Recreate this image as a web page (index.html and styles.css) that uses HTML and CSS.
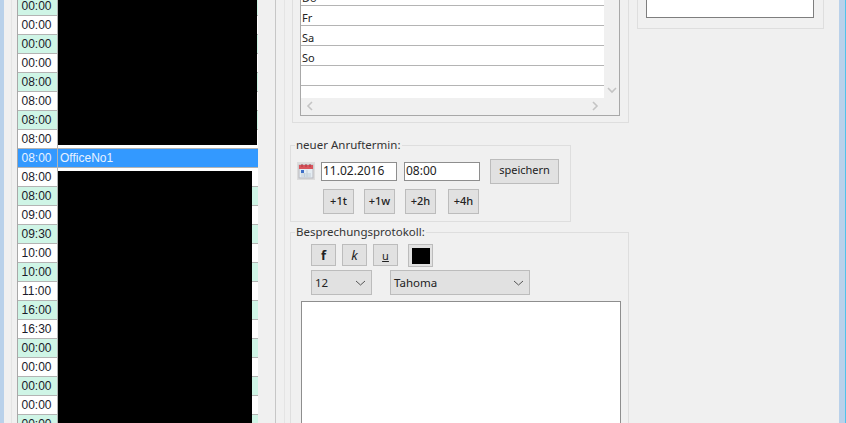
FILE: index.html
```html
<!DOCTYPE html>
<html lang="en">

<head>
    <meta charset="UTF-8">
    <meta name="viewport" content="width=device-width, initial-scale=1.0">
    <title>Anruftermine</title>
    <link rel="stylesheet" href="styles.css">
</head>

<body>
    <div class="window">
        <div class="client">
            <div class="list-pane">
                <div class="call-list">
                    <div class="row mint"><div class="time">00:00</div></div>
                    <div class="row"><div class="time">00:00</div></div>
                    <div class="row mint"><div class="time">00:00</div></div>
                    <div class="row"><div class="time">00:00</div></div>
                    <div class="row mint"><div class="time">08:00</div></div>
                    <div class="row"><div class="time">08:00</div></div>
                    <div class="row mint"><div class="time">08:00</div></div>
                    <div class="row"><div class="time">08:00</div></div>
                    <div class="row selected"><div class="time">08:00</div><div class="name">OfficeNo1</div></div>
                    <div class="row"><div class="time">08:00</div></div>
                    <div class="row mint"><div class="time">08:00</div></div>
                    <div class="row"><div class="time">09:00</div></div>
                    <div class="row mint"><div class="time">09:30</div></div>
                    <div class="row"><div class="time">10:00</div></div>
                    <div class="row mint"><div class="time">10:00</div></div>
                    <div class="row"><div class="time">11:00</div></div>
                    <div class="row mint"><div class="time">16:00</div></div>
                    <div class="row"><div class="time">16:30</div></div>
                    <div class="row mint"><div class="time">00:00</div></div>
                    <div class="row"><div class="time">00:00</div></div>
                    <div class="row mint"><div class="time">00:00</div></div>
                    <div class="row"><div class="time">00:00</div></div>
                    <div class="row mint"><div class="time">00:00</div></div>
                    <div class="redact redact-top"></div>
                    <div class="redact redact-bottom"></div>
                </div>
            </div>

            <div class="detail-pane">
                <div class="center-col">
                    <div class="group days-group">
                        <div class="days-frame">
                            <div class="days-list">
                                <div class="day">Do</div>
                                <div class="day">Fr</div>
                                <div class="day">Sa</div>
                                <div class="day">So</div>
                                <div class="day"></div>
                                <div class="day"></div>
                            </div>
                            <div class="v-scroll">
                                <svg width="10" height="7" viewBox="0 0 10 7"><path d="M1 1l4 4 4-4" fill="none" stroke="#c4c4c4" stroke-width="1.6"/></svg>
                            </div>
                            <div class="h-scroll">
                                <svg width="7" height="10" viewBox="0 0 7 10"><path d="M6 1L2 5l4 4" fill="none" stroke="#c4c4c4" stroke-width="1.6"/></svg>
                                <svg width="7" height="10" viewBox="0 0 7 10"><path d="M1 1l4 4-4 4" fill="none" stroke="#c4c4c4" stroke-width="1.6"/></svg>
                            </div>
                        </div>
                    </div>

                    <fieldset class="group call-group">
                        <legend>neuer Anruftermin:</legend>
                        <div class="call-line">
                            <div class="cal-btn">
                                <svg width="16" height="16" viewBox="0 0 16 16">
                                    <rect x="1" y="2" width="14" height="13" fill="#e4ecf2" stroke="#b9b9c0"/>
                                    <rect x="1" y="2" width="14" height="4" fill="#d9545c"/>
                                    <path d="M4 1v3M8 1v3M12 1v3" stroke="#a83a44"/>
                                    <rect x="3" y="7" width="3" height="3" fill="#3f6fc8"/>
                                    <path d="M3 11h10M3 13h10M9 7v7M6.500 10v4" stroke="#c3ced8"/>
                                </svg>
                            </div>
                            <input class="field date-field" type="text" value="11.02.2016">
                            <input class="field time-field" type="text" value="08:00">
                            <button class="btn save-btn">speichern</button>
                        </div>
                        <div class="plus-line">
                            <button class="btn plus-btn">+1t</button>
                            <button class="btn plus-btn">+1w</button>
                            <button class="btn plus-btn">+2h</button>
                            <button class="btn plus-btn">+4h</button>
                        </div>
                    </fieldset>

                    <fieldset class="group notes-group">
                        <legend>Besprechungsprotokoll:</legend>
                        <div class="format-line">
                            <button class="btn fmt-btn bold">f</button>
                            <button class="btn fmt-btn italic">k</button>
                            <button class="btn fmt-btn under">u</button>
                            <button class="btn color-btn"><span class="swatch"></span></button>
                        </div>
                        <div class="combo-line">
                            <div class="combo size-combo">
                                <span>12</span>
                                <svg width="11" height="6" viewBox="0 0 11 6"><path d="M1 1l4.500 4L10 1" fill="none" stroke="#555" stroke-width="1"/></svg>
                            </div>
                            <div class="combo font-combo">
                                <span>Tahoma</span>
                                <svg width="11" height="6" viewBox="0 0 11 6"><path d="M1 1l4.500 4L10 1" fill="none" stroke="#555" stroke-width="1"/></svg>
                            </div>
                        </div>
                        <div class="notes-box"></div>
                    </fieldset>
                </div>

                <div class="side-col">
                    <div class="group side-group">
                        <div class="side-box"></div>
                    </div>
                </div>
            </div>
        </div>
    </div>
</body>

</html>
```

FILE: styles.css
```css
body {
    margin: 0px;
    padding: 0px;
    background-color: #4fc3ea;
}

.window {
    display: flex;
    box-sizing: border-box;
    width: 845px;
    height: 423px;
    overflow: hidden;
    background-color: #f0f0f0;
    border-left: 4px solid #b9d1ea;
    border-right: 6px solid #b9d1ea;
    font-family: "Noto Sans", sans-serif;
    font-size: 11px;
    color: #222;
}

.client {
    display: flex;
    flex: 1;
    min-width: 0;
    position: relative;
}

/* left list */

.list-pane {
    box-sizing: border-box;
    width: 265px;
    margin-left: 7px;
    padding-left: 5px;
    border-left: 1px solid #e4e4e4;
    border-right: 1px solid #c6c6c6;
    overflow: hidden;
}

.call-list {
    position: relative;
    width: 240px;
    margin-top: -3px;
    background-color: white;
    border-left: 1px solid #a8a8a8;
    font-family: "Liberation Sans", sans-serif;
    font-size: 12px;
}

.row {
    display: flex;
    box-sizing: border-box;
    height: 19px;
    line-height: 19px;
    border-bottom: 1px solid #b4b4b4;
    color: #1a1a2a;
}

.row.mint {
    background-color: #cff5e6;
}

.row.selected {
    background-color: #3399ff;
    color: #e8f2ff;
}

.time {
    box-sizing: border-box;
    width: 40px;
    padding-right: 2px;
    text-align: center;
    border-right: 1px solid #b4b4b4;
}

.name {
    padding-left: 2px;
}

.redact {
    position: absolute;
    background-color: black;
}

.redact-top {
    left: 40px;
    top: 0px;
    width: 199px;
    height: 148px;
}

.redact-bottom {
    left: 40px;
    top: 174px;
    width: 194px;
    height: 260px;
}

/* right side */

.detail-pane {
    display: flex;
    flex: 1;
    margin-left: 8px;
    border-left: 1px solid #e4e4e4;
}

.center-col {
    display: flex;
    flex-direction: column;
    width: 344px;
    flex-shrink: 0;
}

.group {
    box-sizing: border-box;
    flex-shrink: 0;
    margin: 0px;
    border: 1px solid #dedede;
}

.group legend {
    padding: 0px 1px;
    margin-left: 4px;
    line-height: 14px;
    font-size: 11.500px;
    color: #333;
}

.days-group {
    height: 123px;
    margin-left: 7px;
    padding: 0px 8px 6px 7px;
    border-top: none;
}

.days-frame {
    display: grid;
    grid-template-columns: 303px 16px;
    grid-template-rows: 98px 16px;
    border-right: 1px solid #a8a8a8;
    border-bottom: 1px solid #a8a8a8;
    border-left: 1px solid #a8a8a8;
    box-sizing: border-box;
    height: 116px;
}

.days-list {
    overflow: hidden;
    background-color: white;
}

.day {
    box-sizing: border-box;
    height: 20px;
    padding-left: 1px;
    line-height: 23px;
    border-bottom: 1px solid #b4b4b4;
}

.day:first-child {
    margin-top: -14px;
}

.v-scroll {
    display: flex;
    align-items: flex-end;
    justify-content: center;
    padding-bottom: 4px;
}

.h-scroll {
    display: flex;
    align-items: center;
    justify-content: space-between;
    padding: 0px 5px;
}

.call-group {
    width: 281px;
    height: 84px;
    margin-top: 15px;
    margin-left: 5px;
    padding: 0px;
}

.call-line {
    display: flex;
    align-items: center;
    height: 24px;
    margin-top: 7px;
    margin-left: 6px;
}

.cal-btn {
    display: flex;
    align-items: center;
    justify-content: center;
    width: 18px;
    height: 18px;
    background-color: #dcdcdc;
}

.field {
    box-sizing: border-box;
    width: 76px;
    height: 19px;
    padding: 0px 0px 1px 1px;
    border: 1px solid #8e8e8e;
    border-radius: 0px;
    outline: none;
    background-color: white;
    font-family: "Noto Sans", sans-serif;
    font-size: 12px;
    color: #222;
}

.date-field {
    margin-left: 6px;
}

.time-field {
    margin-left: 7px;
}

.btn {
    box-sizing: border-box;
    padding: 0px;
    border: 1px solid #bcbcbc;
    background-color: #e1e1e1;
    font-family: "Noto Sans", sans-serif;
    font-size: 11px;
    color: #222;
}

.save-btn {
    width: 69px;
    height: 25px;
    margin-left: 10px;
    padding-bottom: 3px;
}

.plus-line {
    display: flex;
    margin-top: 6px;
    margin-left: 32px;
}

.plus-btn {
    width: 31px;
    height: 25px;
    margin-right: 10px;
    padding-bottom: 2px;
    font-weight: 500;
}

.plus-btn:last-child {
    margin-left: 2px;
}

.notes-group {
    flex: 1;
    flex-shrink: 0;
    width: 339px;
    margin-top: 3px;
    margin-left: 5px;
    padding: 0px;
    border-bottom: none;
}

.format-line {
    display: flex;
    margin-top: 5px;
    margin-left: 20px;
}

.fmt-btn {
    width: 25px;
    height: 22px;
    margin-right: 6px;
}

.bold {
    font-weight: bold;
    font-size: 13px;
}

.italic {
    font-style: italic;
    font-size: 13px;
}

.under {
    text-decoration: underline;
}

.color-btn {
    display: flex;
    align-items: center;
    justify-content: center;
    width: 25px;
    height: 23px;
    margin-left: 4px;
}

.swatch {
    width: 18px;
    height: 16px;
    background-color: black;
}

.combo-line {
    display: flex;
    margin-top: 3px;
    margin-left: 20px;
}

.combo {
    display: flex;
    align-items: center;
    justify-content: space-between;
    box-sizing: border-box;
    height: 25px;
    padding: 0px 5px 0px 3px;
    border: 1px solid #bcbcbc;
    background-color: #e1e1e1;
    font-size: 11.500px;
}

.size-combo {
    width: 61px;
}

.font-combo {
    width: 140px;
    margin-left: 18px;
}

.notes-box {
    box-sizing: border-box;
    width: 320px;
    height: 140px;
    margin-top: 6px;
    margin-left: 10px;
    border: 1px solid #8e8e8e;
    background-color: white;
}

.side-col {
    flex: 1;
    padding-left: 8px;
}

.side-group {
    width: 187px;
    height: 29px;
    padding-left: 8px;
    border-top: none;
}

.side-box {
    box-sizing: border-box;
    width: 168px;
    height: 18px;
    border: 1px solid #7e7e7e;
    border-top: none;
    background-color: white;
}
```
